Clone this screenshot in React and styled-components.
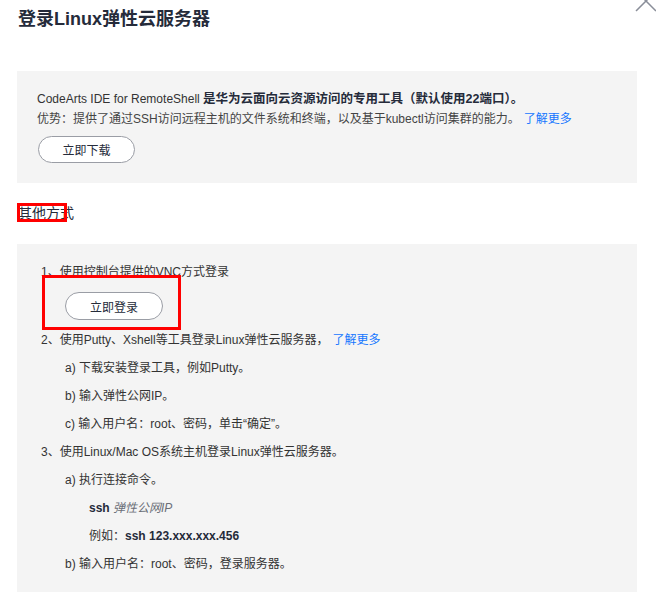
import React from "react";
import styled, { createGlobalStyle } from "styled-components";

const Global = createGlobalStyle`
  html, body { margin: 0; padding: 0; background: #fff; }
  body { font-family: "Liberation Sans", Arial, "Noto Sans CJK SC", sans-serif; color: #333; }
  * { box-sizing: border-box; }
`;

const Dialog = styled.div`
  position: relative;
  width: 656px;
  height: 594px;
  overflow: hidden;
  padding: 5px 19px 0 17px;
`;

const Title = styled.h1`
  margin: 0 0 0 1px;
  font-size: 18px;
  line-height: 28px;
  font-weight: 700;
  color: #252b3a;
`;

const Close = styled.button`
  position: absolute;
  top: -10px;
  left: 635px;
  width: 22px;
  height: 22px;
  padding: 0;
  border: 0;
  background: none;
  color: #8a8e99;
  display: flex;
`;

const Panel = styled.div`
  background: #f4f4f4;
  padding: ${(p) => p.$pad};
  margin-top: ${(p) => p.$top}px;
`;

const Line = styled.div`
  font-size: 12px;
  line-height: ${(p) => p.$lh || 20}px;
  padding-left: ${(p) => p.$indent || 0}px;
  color: ${(p) => p.$color || "#333"};
  white-space: nowrap;
`;

const Strong = styled.strong`
  font-weight: 700;
  font-size: 12.5px;
  color: #252b3a;
`;

const Link = styled.a`
  color: #1476ff;
  text-decoration: none;
  margin-left: ${(p) => p.$gap || 0}px;
`;

const Pill = styled.button`
  display: flex;
  align-items: center;
  justify-content: center;
  width: ${(p) => p.$w}px;
  height: ${(p) => p.$h}px;
  margin: ${(p) => p.$margin};
  padding: 0;
  background: #fff;
  border: 1px solid #9a9da5;
  border-radius: 14px;
  font-family: inherit;
  font-size: 12px;
  color: #252b3a;
`;

const Heading = styled.div`
  position: relative;
  margin: 20px 0 0 1px;
  font-size: 14px;
  line-height: 20px;
  color: #252b3a;
`;

const Mark = styled.span`
  position: absolute;
  left: ${(p) => p.$x}px;
  top: ${(p) => p.$y}px;
  width: ${(p) => p.$w}px;
  height: ${(p) => p.$h}px;
  border: 3px solid #ff0000;
  pointer-events: none;
`;

const Step = styled.div`
  position: relative;
`;

const Mono = styled.b`
  font-weight: 700;
  color: #252b3a;
`;

const Em = styled.i`
  color: #6b6f78;
`;

export default function App() {
  return (
    <>
      <Global />
      <Dialog>
        <Title>登录Linux弹性云服务器</Title>
        <Close aria-label="关闭">
          <svg width="22" height="22" viewBox="0 0 22 22" fill="none" stroke="currentColor" strokeWidth="1.5">
            <line x1="1" y1="21" x2="21" y2="1" />
            <line x1="1" y1="1" x2="21" y2="21" />
          </svg>
        </Close>

        <Panel $top={38} $pad="18px 20px 20px 20px">
          <Line>
            CodeArts IDE for RemoteShell <Strong>是华为云面向云资源访问的专用工具（默认使用22端口）。</Strong>
          </Line>
          <Line $color="#444">
            优势：提供了通过SSH访问远程主机的文件系统和终端，以及基于kubectl访问集群的能力。
            <Link $gap={4}>了解更多</Link>
          </Line>
          <Pill $w={97} $h={27} $margin="7px 0 0 1px">立即下载</Pill>
        </Panel>

        <Heading>
          其他方式
          <Mark $x={-1} $y={0} $w={50} $h={19} />
        </Heading>

        <Panel $top={21} $pad="14px 20px 14px 24px">
          <Step>
            <Line $lh={28}>1、使用控制台提供的VNC方式登录</Line>
            <Pill $w={98} $h={28} $margin="6px 0 0 24px">立即登录</Pill>
            <Mark $x={1} $y={17} $w={139} $h={55} />
          </Step>
          <Line $lh={28} style={{ marginTop: 6 }}>
            2、使用Putty、Xshell等工具登录Linux弹性云服务器，
            <Link $gap={4}>了解更多</Link>
          </Line>
          <Line $lh={28} $indent={24}>a) 下载安装登录工具，例如Putty。</Line>
          <Line $lh={28} $indent={24}>b) 输入弹性公网IP。</Line>
          <Line $lh={28} $indent={24}>c) 输入用户名：root、密码，单击“确定”。</Line>
          <Line $lh={28}>3、使用Linux/Mac OS系统主机登录Linux弹性云服务器。</Line>
          <Line $lh={28} $indent={24}>a) 执行连接命令。</Line>
          <Line $lh={28} $indent={48}>
            <Mono>ssh</Mono> <Em>弹性公网IP</Em>
          </Line>
          <Line $lh={28} $indent={48}>
            例如：<Mono>ssh 123.xxx.xxx.456</Mono>
          </Line>
          <Line $lh={28} $indent={24}>b) 输入用户名：root、密码，登录服务器。</Line>
        </Panel>
      </Dialog>
    </>
  );
}
